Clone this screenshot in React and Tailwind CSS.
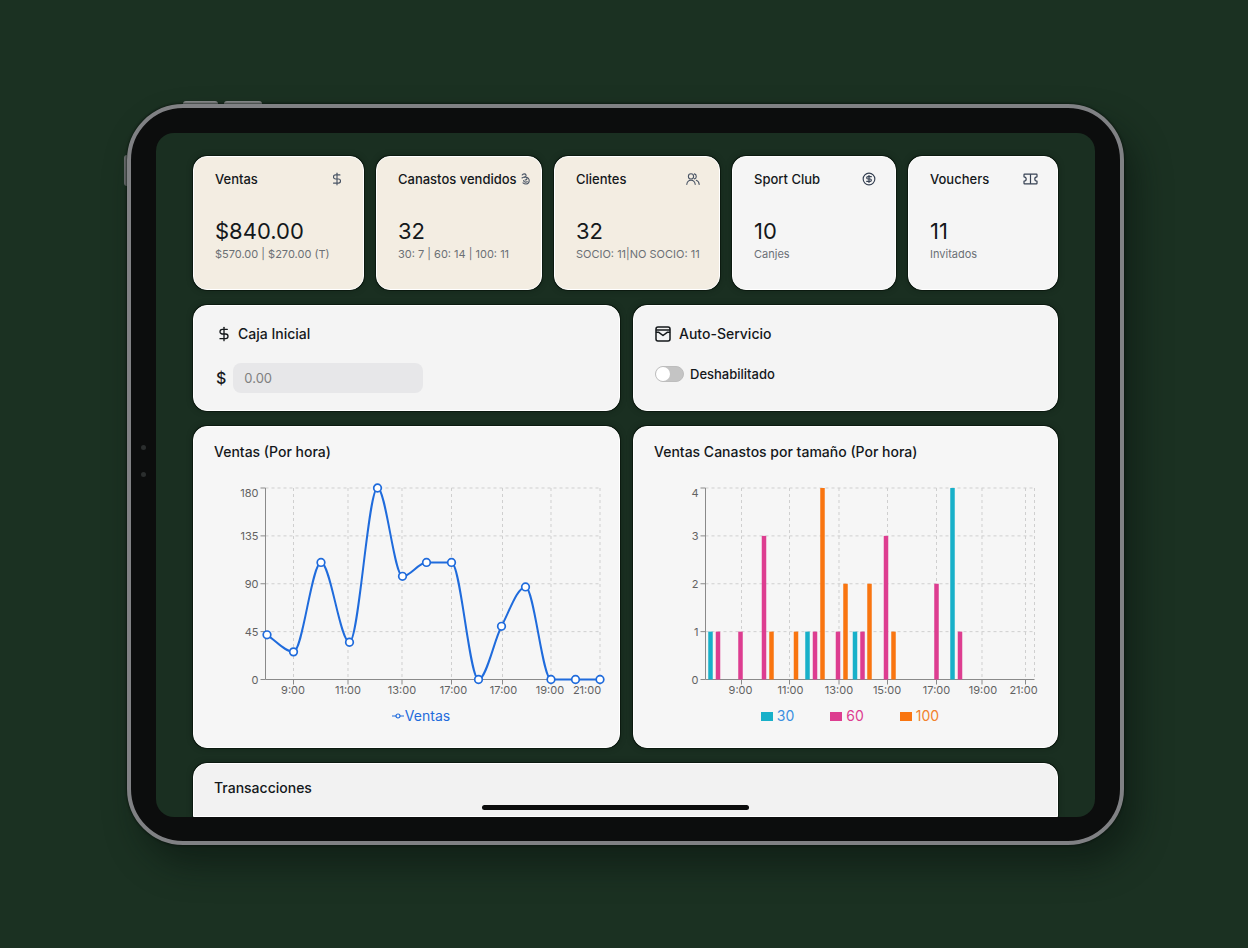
import React, { useState } from 'react';
import { CircleDollarSign, DollarSign } from 'lucide-react';

const BasketIcon = () => (
  <svg
    className="h-3 w-[9px] shrink-0 text-gray-600"
    viewBox="0 0 9 12"
    fill="none"
    stroke="currentColor"
    strokeWidth="1.100"
    strokeLinecap="round"
    strokeLinejoin="round"
  >
    <path d="M1.200 2C2 .6 4.400.4 5 2c.4 1.200-.5 2-1.600 2.300" />
    <path d="M1 5C3 3.600 5.600 3.600 6 5.200c.3 1.200-.8 1.800-2 1.800" />
    <path d="M5.800 4.200C8 5 8.800 7.600 7.600 9.600 6.600 11.300 3.800 11.500 2 9.800" />
    <path d="M2.600 7.600C3 9.200 4.800 9.600 6.200 8.600" />
  </svg>
);

const ClientsIcon = () => (
  <svg
    className="h-3 w-3.5 shrink-0 text-gray-600"
    viewBox="0 0 14 12"
    fill="none"
    stroke="currentColor"
    strokeWidth="1.100"
    strokeLinecap="round"
    strokeLinejoin="round"
  >
    <circle cx="5" cy="3.400" r="2.600" />
    <path d="M.8 11.400c.3-3 2-4.200 4.200-4.200s3.900 1.200 4.200 4.200" />
    <path d="M8.400.9a2.600 2.600 0 0 1 0 5M10.300 7.200c1.700.6 2.700 2 2.900 4.200" />
  </svg>
);

const TicketIcon = () => (
  <svg
    className="h-3 w-[15px] shrink-0 text-gray-700"
    viewBox="0 0 15 12"
    fill="none"
    stroke="currentColor"
    strokeWidth="1.200"
    strokeLinejoin="round"
  >
    <path d="M1.600 1.200h11.800q.6 0 .6.600v2a2.200 2.200 0 0 0 0 4.400v2q0 .6-.6.600H1.600q-.6 0-.6-.600v-2a2.200 2.200 0 0 0 0-4.400v-2q0-.6.6-.600z" />
    <path d="M7.500 1.200v9.600" />
  </svg>
);

const KioskIcon = () => (
  <svg
    className="size-4 shrink-0"
    viewBox="0 0 16 16"
    fill="none"
    stroke="currentColor"
    strokeWidth="1.500"
    strokeLinecap="round"
    strokeLinejoin="round"
  >
    <rect x="1" y="1" width="14" height="14" rx="2" />
    <path d="M1.500 4h13" />
    <path d="M1.500 6.300h2.300L8 9.500l4.200-3.200h2.300" />
  </svg>
);

const stats = [
  {
    title: 'Ventas',
    value: '$840.00',
    detail: '$570.00 | $270.00 (T)',
    icon: <DollarSign className="size-3.5 shrink-0 text-gray-600" strokeWidth={2} />,
    highlighted: true,
  },
  {
    title: 'Canastos vendidos',
    value: '32',
    detail: '30: 7 | 60: 14 | 100: 11',
    icon: <BasketIcon />,
    highlighted: true,
  },
  {
    title: 'Clientes',
    value: '32',
    detail: 'SOCIO: 11|NO SOCIO: 11',
    icon: <ClientsIcon />,
    highlighted: true,
  },
  {
    title: 'Sport Club',
    value: '10',
    detail: 'Canjes',
    icon: <CircleDollarSign className="size-3.5 shrink-0 text-gray-700" strokeWidth={2} />,
  },
  {
    title: 'Vouchers',
    value: '11',
    detail: 'Invitados',
    icon: <TicketIcon />,
  },
];

const sales = [
  { x: 53, value: 42 },
  { x: 79.5, value: 26 },
  { x: 107, value: 110 },
  { x: 135.5, value: 35 },
  { x: 163.5, value: 180 },
  { x: 188.5, value: 97 },
  { x: 212.5, value: 110 },
  { x: 237.5, value: 110 },
  { x: 264.5, value: 0 },
  { x: 287.5, value: 50 },
  { x: 311.5, value: 87 },
  { x: 337, value: 0 },
  { x: 361.5, value: 0 },
  { x: 386, value: 0 },
];

const salesHours = [
  { line: 79.5, label: 79, text: '9:00' },
  { line: 134, label: 134, text: '11:00' },
  { line: 188, label: 188, text: '13:00' },
  { line: 237.5, label: 239.5, text: '17:00' },
  { line: 288.5, label: 289.5, text: '17:00' },
  { line: 337, label: 336, text: '19:00' },
  { line: 386, label: 373, text: '21:00' },
];

const sizes = [
  {
    name: '30',
    fill: 'fill-[#18b0c9]',
    bg: 'bg-[#18b0c9]',
    text: 'text-[#3b8fe0]',
    bars: [
      [56.5, 1],
      [153.5, 1],
      [201, 1],
      [298.5, 4],
    ],
  },
  {
    name: '60',
    fill: 'fill-[#dd3d90]',
    bg: 'bg-[#dd3d90]',
    text: 'text-[#dd3d90]',
    bars: [
      [64, 1],
      [86.5, 1],
      [110, 3],
      [161, 1],
      [184, 1],
      [208.5, 1],
      [232, 3],
      [282.5, 2],
      [306, 1],
    ],
  },
  {
    name: '100',
    fill: 'fill-[#f97510]',
    bg: 'bg-[#f97510]',
    text: 'text-[#f2812c]',
    bars: [
      [117.5, 1],
      [142, 1],
      [168.5, 4],
      [191.5, 2],
      [215.5, 2],
      [239.5, 1],
    ],
  },
];

const sizeHours = [
  { line: 87.5, label: 86.5, text: '9:00' },
  { line: 135.5, label: 136.5, text: '11:00' },
  { line: 185, label: 185, text: '13:00' },
  { line: 233.5, label: 233, text: '15:00' },
  { line: 282.5, label: 282.5, text: '17:00' },
  { line: 328, label: 329, text: '19:00' },
  { line: 371.5, label: 369.5, text: '21:00' },
];

const TOP = 6;
const BOTTOM = 197.5;

const scaleY = (value, max) => BOTTOM - (value / max) * (BOTTOM - TOP);

// monotone cubic, so the line never goes past its points
const curve = (points) => {
  const slopes = points.slice(1).map((p, i) => (p.y - points[i].y) / (p.x - points[i].x));
  const tangents = points.map((p, i) => {
    if (i === 0) return slopes[0];
    if (i === points.length - 1) return slopes[i - 1];
    if (slopes[i - 1] * slopes[i] <= 0) return 0;
    return (2 * slopes[i - 1] * slopes[i]) / (slopes[i - 1] + slopes[i]);
  });
  return points.slice(1).reduce((path, p, i) => {
    const prev = points[i];
    const dx = (p.x - prev.x) / 3;
    return `${path}C${prev.x + dx},${prev.y + tangents[i] * dx},${p.x - dx},${
      p.y - tangents[i + 1] * dx
    },${p.x},${p.y}`;
  }, `M${points[0].x},${points[0].y}`);
};

const Axes = ({ left, right, ticks, max, hours }) => (
  <g>
    <g className="stroke-[#cfcfcf]" strokeDasharray="3 3">
      {ticks.slice(1).map((tick) => (
        <line key={tick} x1={left} x2={right} y1={scaleY(tick, max)} y2={scaleY(tick, max)} />
      ))}
      {hours.map((hour) => (
        <line key={hour.line} x1={hour.line} x2={hour.line} y1={TOP} y2={BOTTOM} />
      ))}
      {hours[hours.length - 1].line < right ? (
        <line x1={right} x2={right} y1={TOP} y2={BOTTOM} />
      ) : null}
    </g>
    <g className="stroke-[#8a8a8a]">
      <line x1={left} x2={left} y1={TOP} y2={BOTTOM} />
      <line x1={left} x2={right} y1={BOTTOM} y2={BOTTOM} />
      {ticks.map((tick) => (
        <line key={tick} x1={left - 5} x2={left} y1={scaleY(tick, max)} y2={scaleY(tick, max)} />
      ))}
      {hours.map((hour) => (
        <line key={hour.line} x1={hour.line} x2={hour.line} y1={BOTTOM} y2={BOTTOM + 5} />
      ))}
    </g>
    <g className="fill-[#626262] text-[11px]">
      {ticks.map((tick) => (
        <text
          key={tick}
          x={left - 7}
          y={tick === max ? TOP + 9 : scaleY(tick, max) + 4}
          textAnchor="end"
        >
          {tick}
        </text>
      ))}
      {hours.map((hour) => (
        <text key={hour.line} x={hour.label} y="212" textAnchor="middle">
          {hour.text}
        </text>
      ))}
    </g>
  </g>
);

const SalesChart = () => {
  const points = sales.map((s) => ({ x: s.x, y: scaleY(s.value, 180) }));
  return (
    <svg className="mt-5 w-full overflow-visible" viewBox="0 0 394 218">
      <Axes left={51.5} right={386} ticks={[0, 45, 90, 135, 180]} max={180} hours={salesHours} />
      <path d={curve(points)} className="fill-none stroke-[#1f6bdc]" strokeWidth="2" />
      {points.map((p) => (
        <circle
          key={p.x}
          cx={p.x}
          cy={p.y}
          r="3.800"
          className="fill-white stroke-[#1f6bdc]"
          strokeWidth="1.700"
        />
      ))}
    </svg>
  );
};

const SizesChart = () => (
  <svg className="mt-5 w-full overflow-visible" viewBox="0 0 392 218">
    <Axes left={51.5} right={380.5} ticks={[0, 1, 2, 3, 4]} max={4} hours={sizeHours} />
    {sizes.map((size) => (
      <g key={size.name} className={size.fill}>
        {size.bars.map(([x, count]) => (
          <rect
            key={x}
            x={x - 2.25}
            y={scaleY(count, 4)}
            width="4.500"
            height={BOTTOM - scaleY(count, 4)}
          />
        ))}
      </g>
    ))}
  </svg>
);

const Card = ({ className, children }) => (
  <section
    className={`border border-white shadow-[0_0_0_1px_rgba(8,20,12,0.7),0_0_6px_rgba(8,20,12,0.35)] ${className}`}
  >
    {children}
  </section>
);

const App = () => {
  const [cash, setCash] = useState('');
  const [selfService, setSelfService] = useState(false);

  return (
    <main className="flex min-h-screen justify-center bg-[#1b3122] px-4 pt-[101px] pb-24 font-['Inter',sans-serif] text-[#14181b]">
      <div className="flex w-full max-w-[1000px] items-start">
        <div className="mt-[54px] h-[31px] w-[3px] shrink-0 rounded-l-sm bg-[#6f7273]" />
        <div className="min-w-0 flex-1">
          <div className="ml-14 flex h-[3px] gap-1.5">
            <div className="w-[35px] rounded-t-sm bg-[#8b8e8f]" />
            <div className="w-[38px] rounded-t-sm bg-[#8b8e8f]" />
          </div>
          <div className="relative rounded-[56px] border-4 border-[#808184] bg-[#0c0d0d] px-[25px] pt-[25px] pb-6 shadow-[0_0_2px_1px_rgba(8,16,11,0.6),12px_20px_32px_rgba(10,20,14,0.55)]">
            <div className="absolute top-[337px] left-[10px] flex flex-col gap-[22px]">
              <span className="size-[5px] rounded-full bg-[#2b2e2e]" />
              <span className="size-[5px] rounded-full bg-[#2b2e2e]" />
            </div>
            <div className="relative flex flex-col gap-[15px] overflow-hidden rounded-[18px] bg-[#1a2f21] px-[37px] pt-[23px]">
              <div className="grid grid-cols-[171fr_166fr_166fr_164fr_150fr] gap-3">
                {stats.map((stat) => (
                  <Card
                    key={stat.title}
                    className={`min-w-0 rounded-[14px] pt-3 pr-[19px] pb-[27px] pl-[21px] whitespace-nowrap ${
                      stat.highlighted ? 'bg-[#f3ede2]' : 'bg-[#f5f5f5]'
                    }`}
                  >
                    <div className="flex items-center justify-between gap-1">
                      <h2 className="text-[13px] leading-5 font-medium">{stat.title}</h2>
                      {stat.icon}
                    </div>
                    <p className="mt-7 text-[22px] leading-7">{stat.value}</p>
                    <p className="mt-px text-[11px] leading-4 text-[#6b7075]">{stat.detail}</p>
                  </Card>
                ))}
              </div>
              <div className="grid grid-cols-[427fr_425fr] gap-x-[13px] gap-y-[15px]">
                <Card className="rounded-[14px] bg-[#f4f4f4] px-[22px] pt-[18px] pb-[17px]">
                  <h2 className="flex items-center gap-1.5 text-sm leading-5 font-medium">
                    <DollarSign className="size-4" strokeWidth={2} />
                    Caja Inicial
                  </h2>
                  <div className="mt-[19px] flex items-center gap-[7px]">
                    <label htmlFor="cash" className="text-base leading-5 font-medium">
                      $
                    </label>
                    <input
                      id="cash"
                      type="text"
                      placeholder="0.00"
                      value={cash}
                      onChange={(event) => setCash(event.target.value)}
                      className="h-[30px] w-[190px] rounded-lg bg-[#e7e7e9] px-[11px] text-[13px] placeholder:text-[#808080] focus:outline-none"
                    />
                  </div>
                </Card>
                <Card className="rounded-[14px] bg-[#f4f4f4] px-[21px] pt-[18px] pb-[17px]">
                  <h2 className="flex items-center gap-2 text-sm leading-5 font-medium">
                    <KioskIcon />
                    Auto-Servicio
                  </h2>
                  <label className="mt-5 flex w-fit items-center gap-1.5 text-[13px] leading-5 font-medium">
                    <input
                      type="checkbox"
                      role="switch"
                      checked={selfService}
                      onChange={() => setSelfService(!selfService)}
                      className="h-4 w-[29px] appearance-none rounded-full border border-[#bdbdbd] bg-[#c4c4c4] before:block before:size-3.5 before:rounded-full before:bg-white checked:bg-green-700 checked:before:ml-[13px]"
                    />
                    {selfService ? 'Habilitado' : 'Deshabilitado'}
                  </label>
                </Card>
                <Card className="rounded-[14px] bg-[#f6f6f6] pt-[15px] pr-[11px] pb-[21px] pl-5">
                  <h2 className="text-sm leading-5 font-medium">Ventas (Por hora)</h2>
                  <SalesChart />
                  <div className="mt-1.5 flex items-center justify-center gap-px pl-5 text-sm leading-5 text-[#1f6bdc]">
                    <svg
                      className="h-2 w-3"
                      viewBox="0 0 12 8"
                      fill="none"
                      stroke="currentColor"
                      strokeWidth="1.200"
                    >
                      <path d="M0 4h4M8 4h4" />
                      <circle cx="6" cy="4" r="2" />
                    </svg>
                    Ventas
                  </div>
                </Card>
                <Card className="rounded-[14px] bg-[#f6f6f6] pt-[15px] pr-[11px] pb-[21px] pl-5">
                  <h2 className="text-sm leading-5 font-medium">
                    Ventas Canastos por tamaño (Por hora)
                  </h2>
                  <SizesChart />
                  <ul className="mt-1.5 flex items-center justify-center gap-9 text-sm leading-5">
                    {sizes.map((size) => (
                      <li key={size.name} className={`flex items-center gap-1 ${size.text}`}>
                        <span className={`h-[9px] w-3 ${size.bg}`} />
                        {size.name}
                      </li>
                    ))}
                  </ul>
                </Card>
              </div>
              <Card className="rounded-t-[14px] bg-[#f2f2f2] px-5 pt-[14px] pb-[18px]">
                <h2 className="text-sm leading-5 font-medium">Transacciones</h2>
              </Card>
              <div className="absolute inset-x-0 bottom-[7px] flex justify-center pr-5">
                <div className="h-[5px] w-[267px] rounded-full bg-[#0c0d0d]" />
              </div>
            </div>
          </div>
        </div>
      </div>
    </main>
  );
};

export default App;
